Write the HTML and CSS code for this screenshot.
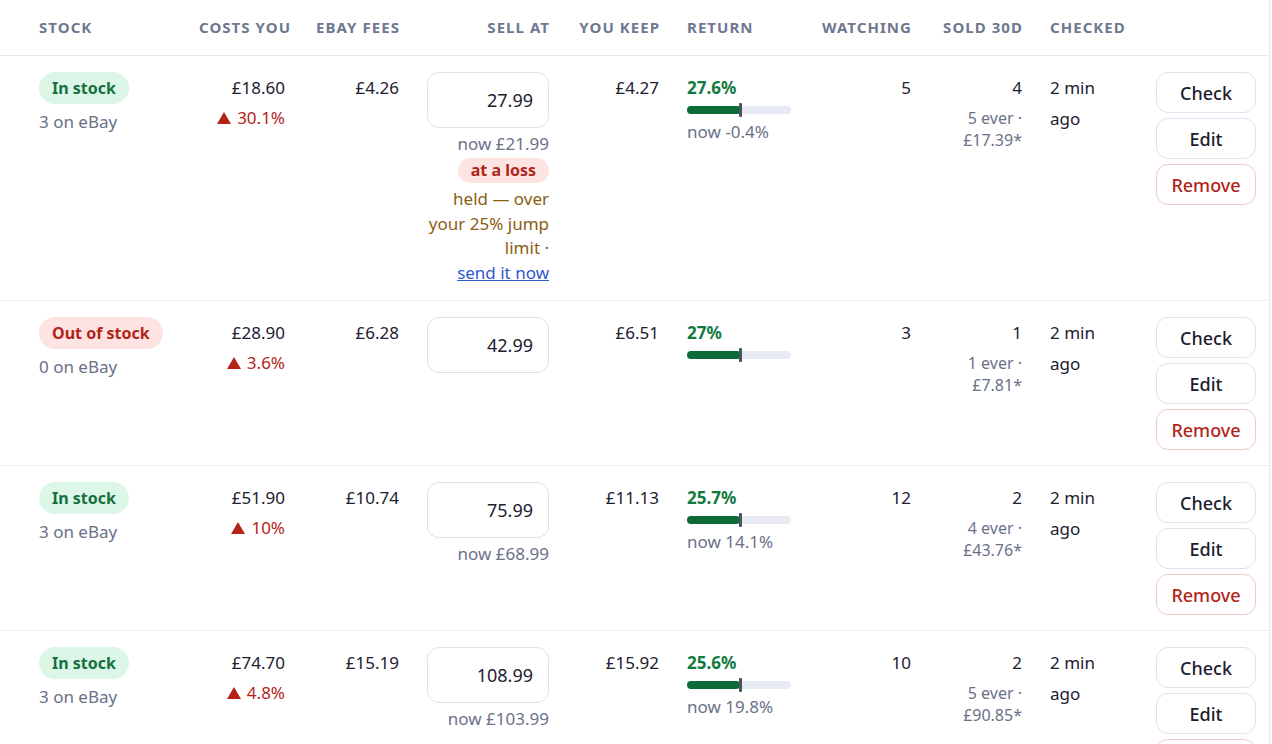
FILE: index.html
```html
<!DOCTYPE html>
<html lang="en">
<head>
    <meta charset="UTF-8">
    <meta name="viewport" content="width=device-width, initial-scale=1.0">
    <title>Listings</title>
    <link rel="stylesheet" href="styles.css">
</head>
<body>
    <div class="wrap">
        <table class="listings">
            <colgroup>
                <col class="c-stock">
                <col class="c-costs">
                <col class="c-fees">
                <col class="c-sell">
                <col class="c-keep">
                <col class="c-return">
                <col class="c-watch">
                <col class="c-sold">
                <col class="c-checked">
                <col class="c-actions">
            </colgroup>
            <thead>
                <tr>
                    <th class="first left">Stock</th>
                    <th>Costs you</th>
                    <th>eBay fees</th>
                    <th>Sell at</th>
                    <th>You keep</th>
                    <th class="left">Return</th>
                    <th>Watching</th>
                    <th>Sold 30d</th>
                    <th class="left">Checked</th>
                    <th></th>
                </tr>
            </thead>
            <tbody>
                <!-- row 1 -->
                <tr>
                    <td class="first left">
                        <div class="stack start">
                            <span class="badge ok">In stock</span>
                            <span class="count">3 on eBay</span>
                        </div>
                    </td>
                    <td>
                        <div>£18.60</div>
                        <div class="rise"><span class="up"></span>30.1%</div>
                    </td>
                    <td>£4.26</td>
                    <td>
                        <div class="stack end">
                            <input class="price" type="text" value="27.99">
                            <span class="note">now £21.99</span>
                            <span class="loss">at a loss</span>
                            <span class="held">held — over your 25% jump limit · <a href="#" class="send">send it now</a></span>
                        </div>
                    </td>
                    <td>£4.27</td>
                    <td class="left">
                        <div class="ret">27.6%</div>
                        <div class="bar"><div class="bar-fill" style="width: 54px"></div><div class="bar-mark"></div></div>
                        <div class="note ret-now">now -0.4%</div>
                    </td>
                    <td>5</td>
                    <td>
                        <div>4</div>
                        <div class="ever">5 ever ·<br>£17.39*</div>
                    </td>
                    <td class="left"><div class="checked">2 min ago</div></td>
                    <td class="left">
                        <div class="actions">
                            <button>Check</button>
                            <button>Edit</button>
                            <button class="remove">Remove</button>
                        </div>
                    </td>
                </tr>
                <!-- row 2 -->
                <tr>
                    <td class="first left">
                        <div class="stack start">
                            <span class="badge out">Out of stock</span>
                            <span class="count">0 on eBay</span>
                        </div>
                    </td>
                    <td>
                        <div>£28.90</div>
                        <div class="rise"><span class="up"></span>3.6%</div>
                    </td>
                    <td>£6.28</td>
                    <td>
                        <div class="stack end">
                            <input class="price" type="text" value="42.99">
                        </div>
                    </td>
                    <td>£6.51</td>
                    <td class="left">
                        <div class="ret">27%</div>
                        <div class="bar"><div class="bar-fill" style="width: 54px"></div><div class="bar-mark"></div></div>
                    </td>
                    <td>3</td>
                    <td>
                        <div>1</div>
                        <div class="ever">1 ever ·<br>£7.81*</div>
                    </td>
                    <td class="left"><div class="checked">2 min ago</div></td>
                    <td class="left">
                        <div class="actions">
                            <button>Check</button>
                            <button>Edit</button>
                            <button class="remove">Remove</button>
                        </div>
                    </td>
                </tr>
                <!-- row 3 -->
                <tr>
                    <td class="first left">
                        <div class="stack start">
                            <span class="badge ok">In stock</span>
                            <span class="count">3 on eBay</span>
                        </div>
                    </td>
                    <td>
                        <div>£51.90</div>
                        <div class="rise"><span class="up"></span>10%</div>
                    </td>
                    <td>£10.74</td>
                    <td>
                        <div class="stack end">
                            <input class="price" type="text" value="75.99">
                            <span class="note">now £68.99</span>
                        </div>
                    </td>
                    <td>£11.13</td>
                    <td class="left">
                        <div class="ret">25.7%</div>
                        <div class="bar"><div class="bar-fill" style="width: 53px"></div><div class="bar-mark"></div></div>
                        <div class="note ret-now">now 14.1%</div>
                    </td>
                    <td>12</td>
                    <td>
                        <div>2</div>
                        <div class="ever">4 ever ·<br>£43.76*</div>
                    </td>
                    <td class="left"><div class="checked">2 min ago</div></td>
                    <td class="left">
                        <div class="actions">
                            <button>Check</button>
                            <button>Edit</button>
                            <button class="remove">Remove</button>
                        </div>
                    </td>
                </tr>
                <!-- row 4 -->
                <tr>
                    <td class="first left">
                        <div class="stack start">
                            <span class="badge ok">In stock</span>
                            <span class="count">3 on eBay</span>
                        </div>
                    </td>
                    <td>
                        <div>£74.70</div>
                        <div class="rise"><span class="up"></span>4.8%</div>
                    </td>
                    <td>£15.19</td>
                    <td>
                        <div class="stack end">
                            <input class="price" type="text" value="108.99">
                            <span class="note">now £103.99</span>
                        </div>
                    </td>
                    <td>£15.92</td>
                    <td class="left">
                        <div class="ret">25.6%</div>
                        <div class="bar"><div class="bar-fill" style="width: 53px"></div><div class="bar-mark"></div></div>
                        <div class="note ret-now">now 19.8%</div>
                    </td>
                    <td>10</td>
                    <td>
                        <div>2</div>
                        <div class="ever">5 ever ·<br>£90.85*</div>
                    </td>
                    <td class="left"><div class="checked">2 min ago</div></td>
                    <td class="left">
                        <div class="actions">
                            <button>Check</button>
                            <button>Edit</button>
                            <button class="remove">Remove</button>
                        </div>
                    </td>
                </tr>
            </tbody>
        </table>
    </div>
</body>
</html>
```

FILE: styles.css
```css
body {
    margin: 0;
    font-family: "Noto Sans", "Open Sans", sans-serif;
    color: #1d2030;
    background: #fff;
    overflow: hidden;
}
.wrap {
    width: 1269px;
    border-right: 1px solid #e6e8ef;
}
.listings {
    width: 1269px;
    border-collapse: collapse;
    table-layout: fixed;
}
.c-stock { width: 185px; }
.c-costs { width: 114px; }
.c-fees { width: 114px; }
.c-sell { width: 150px; }
.c-keep { width: 110px; }
.c-return { width: 132px; }
.c-watch { width: 120px; }
.c-sold { width: 111px; }
.c-checked { width: 106px; }
.c-actions { width: 127px; }

th {
    font-size: 15px;
    font-weight: 700;
    letter-spacing: 0.07em;
    text-transform: uppercase;
    color: #6f7791;
    padding: 16px 13px 16px 14px;
    line-height: 23px;
    text-align: right;
    white-space: nowrap;
    border-bottom: 1px solid #e6e8ef;
}
td {
    padding: 16px 14px 15px;
    vertical-align: top;
    text-align: right;
    font-size: 17px;
    line-height: 31px;
    border-bottom: 1px solid #eceef3;
}
.listings .left { text-align: left; }
.listings .first { padding-left: 39px; }

.stack {
    display: flex;
    flex-direction: column;
}
.stack.start { align-items: flex-start; }
.stack.end { align-items: flex-end; text-align: right; }

.badge {
    display: inline-block;
    height: 32px;
    line-height: 32px;
    padding: 0 13px;
    border-radius: 16px;
    font-size: 16px;
    font-weight: 700;
}
.badge.ok {
    background: #dcf6e7;
    color: #157040;
}
.badge.out {
    background: #fde3e1;
    color: #b12419;
}
.count {
    margin-top: 4px;
    line-height: 28px;
    color: #6a7189;
}

.rise {
    color: #b42318;
    line-height: 30px;
}
.up {
    display: inline-block;
    width: 0;
    height: 0;
    border-left: 7px solid transparent;
    border-right: 7px solid transparent;
    border-bottom: 12px solid #b42318;
    margin-right: 6px;
}

.price {
    box-sizing: border-box;
    width: 122px;
    height: 56px;
    border: 1.5px solid #dde0ec;
    border-radius: 12px;
    padding: 0 15px;
    font-family: "Noto Sans", sans-serif;
    font-size: 18px;
    color: #1d2030;
    text-align: right;
    background: #fff;
}
.note {
    color: #6a7189;
    line-height: 24px;
}
.stack .note { margin-top: 4px; }
.loss {
    display: inline-block;
    margin-top: 2px;
    height: 25px;
    line-height: 25px;
    padding: 0 13px;
    border-radius: 13px;
    background: #fde3e1;
    color: #b12419;
    font-size: 16px;
    font-weight: 700;
}
.held {
    margin-top: 4px;
    line-height: 24.5px;
    color: #8b5d12;
}
.send {
    color: #3157d0;
    white-space: nowrap;
}

.ret {
    color: #137a3f;
    font-weight: 700;
}
.bar {
    position: relative;
    width: 104px;
    height: 8px;
    margin-top: 3px;
    border-radius: 4px;
    background: #e8ebf4;
}
.bar-fill {
    height: 100%;
    border-radius: 4px;
    background: #0d6b3a;
}
.bar-mark {
    position: absolute;
    left: 52px;
    top: -3px;
    width: 3px;
    height: 14px;
    border-radius: 1px;
    background: #4b5262;
}
.ret-now { margin-top: 6px; }

.ever {
    margin-top: 4px;
    font-size: 16px;
    line-height: 22px;
    color: #6a7189;
}
.checked {
    max-width: 70px;
}

.actions {
    display: flex;
    flex-direction: column;
    gap: 5px;
}
button {
    width: 100px;
    height: 41px;
    border: 1.5px solid #dfe2ee;
    border-radius: 12px;
    background: #fff;
    font-family: "Noto Sans", sans-serif;
    font-size: 18px;
    font-weight: 500;
    color: #1d2030;
    cursor: pointer;
}
button.remove {
    color: #b42318;
    border-color: #f2c9c4;
}
```
